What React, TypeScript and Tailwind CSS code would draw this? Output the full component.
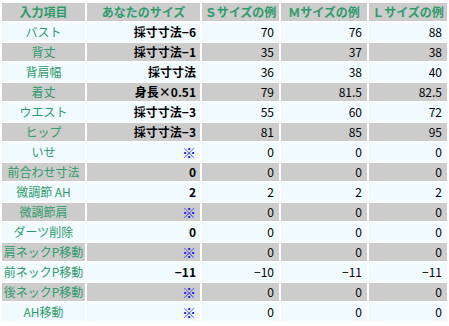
import React from "react";

const rows: [string, string, string, string, string][] = [
  ["バスト", "採寸寸法−6", "70", "76", "88"],
  ["背丈", "採寸寸法−1", "35", "37", "38"],
  ["背肩幅", "採寸寸法", "36", "38", "40"],
  ["着丈", "身長×0.51", "79", "81.5", "82.5"],
  ["ウエスト", "採寸寸法−3", "55", "60", "72"],
  ["ヒップ", "採寸寸法−3", "81", "85", "95"],
  ["いせ", "※", "0", "0", "0"],
  ["前合わせ寸法", "0", "0", "0", "0"],
  ["微調節 AH", "2", "2", "2", "2"],
  ["微調節肩", "※", "0", "0", "0"],
  ["ダーツ削除", "0", "0", "0", "0"],
  ["肩ネックP移動", "※", "0", "0", "0"],
  ["前ネックP移動", "−11", "−10", "−11", "−11"],
  ["後ネックP移動", "※", "0", "0", "0"],
  ["AH移動", "※", "0", "0", "0"],
];

export default function App() {
  return (
    <div
      className="w-[449px] h-[326px] bg-white text-[12px] leading-[18px]"
      style={{ fontFamily: '"Noto Sans CJK JP", "Noto Sans", sans-serif' }}
    >
      <table className="table-fixed border-separate border-spacing-[2px] w-[449px] mt-px">
        <colgroup>
          <col className="w-[83px]" />
          <col className="w-[113px]" />
          <col className="w-[77px]" />
          <col className="w-[86px]" />
          <col className="w-[78px]" />
        </colgroup>
        <thead>
          <tr className="h-[18px] bg-[#cccccc] text-[#2f9a6a] font-bold">
            <th className="p-0 text-center">入力項目</th>
            <th className="p-0 text-center">あなたのサイズ</th>
            <th className="p-0 text-center">Ｓサイズの例</th>
            <th className="p-0 text-center">Ｍサイズの例</th>
            <th className="p-0 text-center">Ｌサイズの例</th>
          </tr>
        </thead>
        <tbody>
          {rows.map((r, i) => (
            <tr
              key={i}
              className={`h-[18px] ${i % 2 === 0 ? "bg-[#f0faff]" : "bg-[#cccccc]"}`}
            >
              <td className="p-0 text-center text-[#2f9a6a] whitespace-nowrap">{r[0]}</td>
              <td
                className={`p-0 pr-[4px] text-right font-bold whitespace-nowrap ${
                  r[1] === "※" ? "text-[#0000ff] text-[14px]" : "text-black"
                }`}
              >
                {r[1]}
              </td>
              <td className="p-0 pr-[5px] text-right text-black">{r[2]}</td>
              <td className="p-0 pr-[5px] text-right text-black">{r[3]}</td>
              <td className="p-0 pr-[5px] text-right text-black">{r[4]}</td>
            </tr>
          ))}
        </tbody>
      </table>
    </div>
  );
}
